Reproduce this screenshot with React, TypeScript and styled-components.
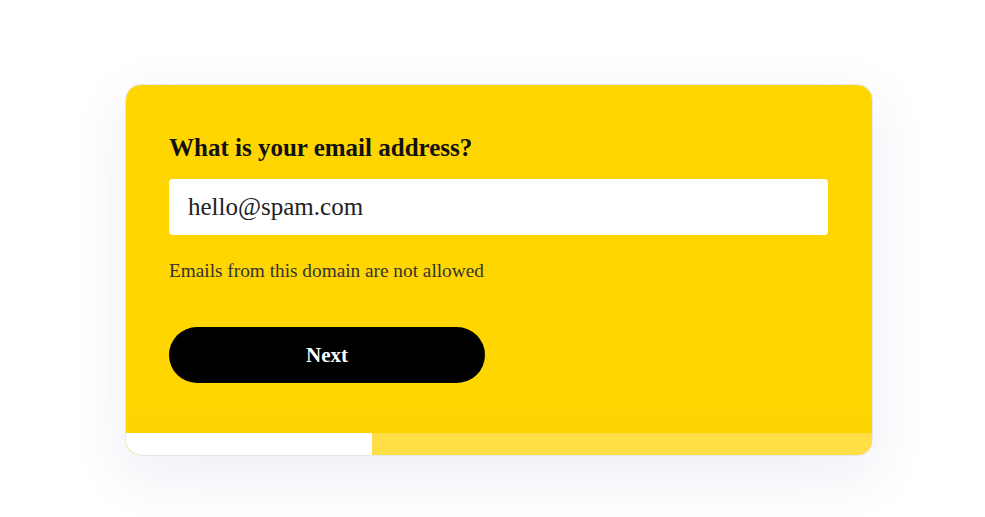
import { FC } from 'react'
import styled, { createGlobalStyle } from 'styled-components'

const GlobalStyle = createGlobalStyle`
  html, body {
    margin: 0;
    padding: 0;
    background: #fff;
  }
  body {
    font-family: "Liberation Serif", "DejaVu Serif", serif;
  }
`

const Page = styled.div`
  min-height: 100vh;
  box-sizing: border-box;
  padding: 84px 0 0 125px;
`

const Card = styled.div`
  width: 748px;
  box-sizing: border-box;
  border: 1px solid #e6e6ef;
  border-radius: 16px;
  overflow: hidden;
  background: linear-gradient(180deg, #ffd600 0%, #ffd600 84%, #fdd400 100%);
  box-shadow: 0 18px 60px rgba(60, 60, 150, 0.09);
`

const Body = styled.div`
  padding: 48px 44px 50px 43px;
`

const Title = styled.h2`
  margin: 0 0 16px;
  font-size: 25px;
  line-height: 30px;
  font-weight: 700;
  color: #111;
`

const Input = styled.input`
  display: block;
  width: 100%;
  box-sizing: border-box;
  height: 56px;
  padding: 0 19px;
  border: none;
  border-radius: 4px;
  background: #fff;
  font-family: inherit;
  font-size: 25px;
  color: #222;
  outline: none;
`

const ErrorText = styled.p`
  margin: 24px 0 44px;
  font-size: 19.3px;
  line-height: 24px;
  color: #333;
`

const NextButton = styled.button`
  display: block;
  width: 316px;
  height: 56px;
  border: none;
  border-radius: 28px;
  background: #000;
  color: #fff;
  font-family: inherit;
  font-size: 21px;
  font-weight: 700;
  cursor: pointer;
`

const Progress = styled.div`
  height: 22px;
  background: #ffdf45;
`

const ProgressFill = styled.div`
  height: 100%;
  background: #fff;
`

const App: FC = () => {
  const progress = 33
  return (
    <>
      <GlobalStyle />
      <Page>
        <Card>
          <Body>
            <Title>What is your email address?</Title>
            <Input type="email" defaultValue="hello@spam.com" />
            <ErrorText>Emails from this domain are not allowed</ErrorText>
            <NextButton>Next</NextButton>
          </Body>
          <Progress>
            <ProgressFill style={{ width: `${progress}%` }} />
          </Progress>
        </Card>
      </Page>
    </>
  )
}

export default App
